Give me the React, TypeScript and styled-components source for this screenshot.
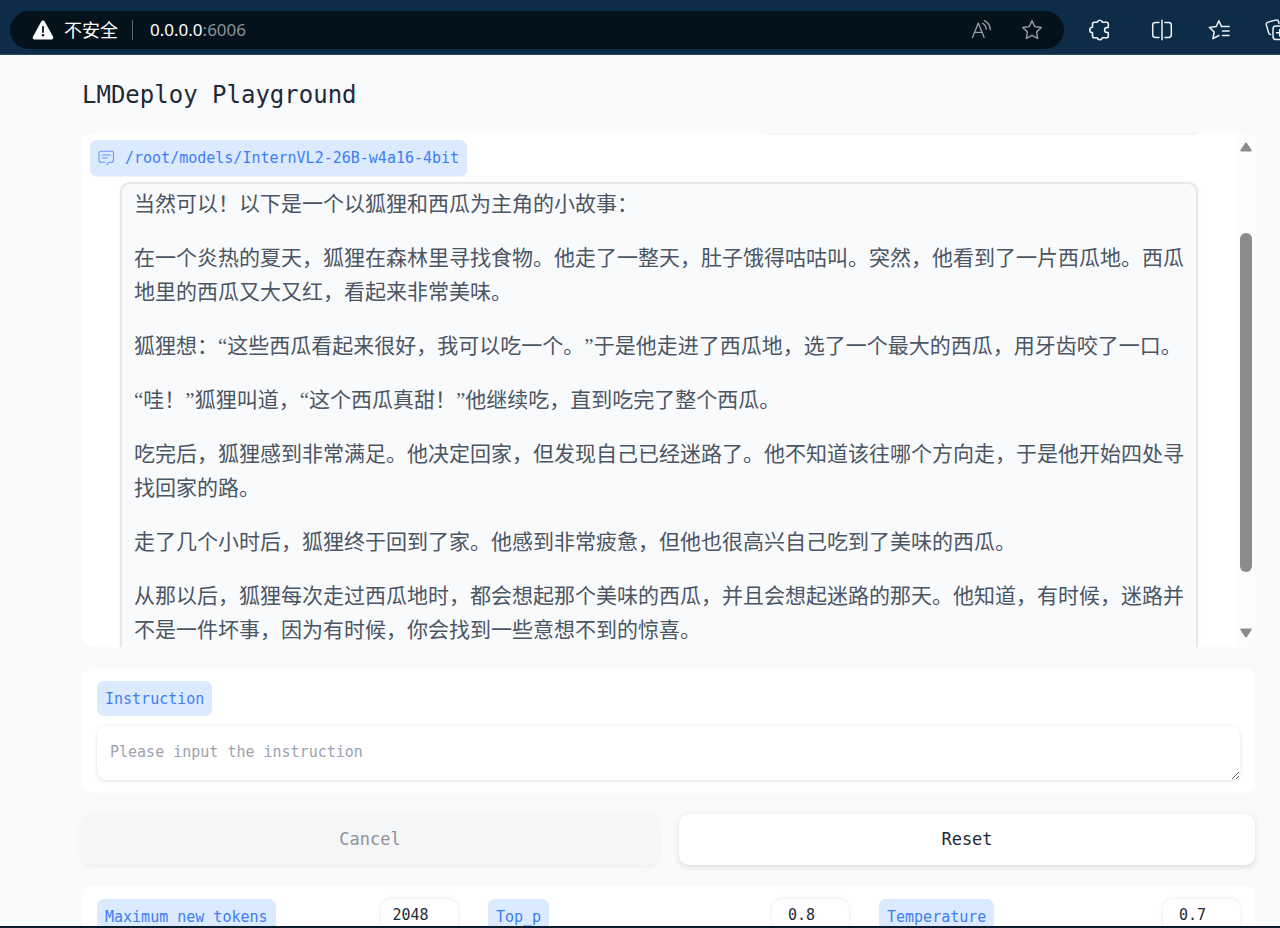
import React from "react";
import styled, { createGlobalStyle, css } from "styled-components";

const GlobalStyle = createGlobalStyle`
  *, *::before, *::after { box-sizing: border-box; }
  body { margin: 0; background: #f9fafc; }
`;

const mono = `"DejaVu Sans Mono", "Liberation Mono", monospace`;
const sans = `"Noto Sans", "Noto Sans CJK SC", sans-serif`;
const story = `"Liberation Serif", "Noto Sans CJK SC", sans-serif`;

const Window = styled.div`
  display: flex;
  flex-direction: column;
  height: 100vh;
  overflow: hidden;
  background: #f9fafc;
  border-bottom: 2px solid #0a1c30;
  font-family: ${mono};
  color: #1f2937;
`;

const BrowserBar = styled.header`
  display: flex;
  flex-shrink: 0;
  align-items: center;
  height: 55px;
  padding: 6px 0 0 10px;
  background: #0d2c48;
  border-bottom: 1px solid #2a455e;
  overflow: hidden;
`;

const AddressBar = styled.div`
  display: flex;
  flex: 1;
  align-items: center;
  height: 38px;
  padding: 0 21px 0 22px;
  border-radius: 19px;
  background: #04121c;
  color: #fff;
  font-family: ${sans};
`;

const Security = styled.span`
  margin: 0 14px 0 10px;
  font-size: 18px;
  line-height: 24px;
`;

const Divider = styled.span<{ $tone: string }>`
  width: 1px;
  height: 20px;
  background: ${(p) => p.$tone};
`;

const Url = styled.span`
  flex: 1;
  margin-left: 17px;
  font-size: 17px;
  line-height: 24px;
`;

const Port = styled.span`
  color: #8b9096;
`;

const IconButton = styled.button<{ $tone?: string }>`
  display: flex;
  flex-shrink: 0;
  padding: 0;
  border: 0;
  background: none;
  color: ${(p) => p.$tone ?? "#eef3f8"};
`;

const AddressTools = styled.div`
  display: flex;
  gap: 28px;
`;

const Toolbar = styled.nav`
  display: flex;
  flex-shrink: 0;
  align-items: center;
  gap: 20px;
  width: 216px;
  padding-left: 25px;
  overflow: hidden;
`;

const ToolbarGroup = styled.div`
  display: flex;
  gap: 35px;
`;

const Page = styled.main`
  flex: 1;
  min-height: 0;
  padding: 24px 25px 0 82px;
  overflow: hidden;
`;

const Title = styled.h1`
  margin: 0 0 22px;
  font-size: 24px;
  font-weight: 400;
  line-height: 32px;
`;

const Card = styled.section`
  border-radius: 10px;
  background: #fff;
`;

const Chat = styled(Card)`
  display: flex;
  height: 514px;
  margin-bottom: 21px;
  overflow: hidden;
`;

const Messages = styled.div`
  flex: 1;
  padding: 0 38px 0 8px;
  overflow: hidden;
`;

const UserBubbleEdge = styled.div`
  width: 39%;
  height: 2px;
  margin: 0 0 5px auto;
  border-radius: 0 0 8px 8px;
  background: #f4f5f6;
`;

const chip = css`
  display: inline-flex;
  align-items: center;
  height: 35px;
  padding: 0 8px;
  border-radius: 7px;
  background: #dbeafe;
  color: #3f7df6;
  font-size: 15px;
  line-height: 20px;
  white-space: nowrap;
`;

const Chip = styled.label`
  ${chip}
`;

const ModelChip = styled.div`
  ${chip}
  display: flex;
  width: fit-content;
  height: 36px;
  gap: 10px;
  margin-bottom: 6px;
  box-shadow: 0 1px 1px rgba(0, 0, 0, 0.06);
`;

const Bubble = styled.article`
  margin-left: 30px;
  padding: 3px 11px 12px 12px;
  border: 2px solid #e5e7eb;
  border-radius: 10px;
  background: #f9fafc;
  box-shadow: 0 1px 4px rgba(0, 0, 0, 0.06);
  color: #4b5563;
  font-family: ${story};
  font-size: 21px;
  line-height: 34px;
  text-spacing-trim: space-all;
`;

const Paragraph = styled.p`
  margin: 0 0 20px;
`;

const ScrollTrack = styled.div`
  display: flex;
  flex-direction: column;
  align-items: center;
  width: 19px;
  padding: 9px 0;
  background: #fcfcfc;
`;

const ScrollLane = styled.div`
  display: flex;
  flex: 1;
  flex-direction: column;
`;

const ScrollSpace = styled.div<{ $share: number }>`
  flex: ${(p) => p.$share};
`;

const ScrollThumb = styled.div`
  flex: 339;
  width: 12px;
  border-radius: 6px;
  background: #8b8b8b;
`;

const InstructionCard = styled(Card)`
  display: flex;
  flex-direction: column;
  align-items: flex-start;
  gap: 10px;
  margin-bottom: 21px;
  padding: 13px 15px;
`;

const TextArea = styled.textarea`
  display: block;
  width: 100%;
  height: 54px;
  padding: 15px 13px;
  border: 0;
  border-radius: 10px;
  background: #fff;
  box-shadow: 0 1px 4px rgba(0, 0, 0, 0.12);
  color: #1f2937;
  font-family: ${mono};
  font-size: 15px;
  line-height: 22px;
  &::placeholder { color: #9ca3af; }
`;

const Actions = styled.div`
  display: grid;
  grid-template-columns: 1fr 1fr;
  gap: 21px;
  margin-bottom: 21px;
`;

const ActionButton = styled.button`
  height: 51px;
  padding: 0 16px 1px;
  border: 0;
  border-radius: 10px;
  background: #fff;
  box-shadow: 0 2px 6px rgba(0, 0, 0, 0.13);
  color: #1f2937;
  font-family: ${mono};
  font-size: 17px;
  line-height: 24px;
  &:disabled {
    background: #f5f6f8;
    box-shadow: 0 2px 6px rgba(0, 0, 0, 0.06);
    color: #8f9296;
  }
`;

const Settings = styled(Card)`
  display: grid;
  grid-template-columns: repeat(3, 1fr);
  gap: 30px;
  padding: 13px 15px;
`;

const Setting = styled.div`
  display: flex;
  align-items: flex-start;
  justify-content: space-between;
`;

const NumberBox = styled.input`
  width: 77px;
  height: 32px;
  padding: 0 20px 0 2px;
  border: 0;
  border-radius: 10px;
  background: #fff;
  box-shadow: 0 0 4px rgba(0, 0, 0, 0.1);
  color: #1f2937;
  font-family: ${mono};
  font-size: 15px;
  line-height: 20px;
  text-align: center;
`;

const line = {
  fill: "none",
  stroke: "currentColor",
  strokeLinecap: "round" as const,
  strokeLinejoin: "round" as const,
};

const WarningIcon = () => (
  <svg width="22" height="20" viewBox="0 0 22 20" aria-hidden="true">
    <path d="M9.3 1.4a2 2 0 0 1 3.4 0l8.4 15.4a1.8 1.8 0 0 1-1.6 2.7H2.5a1.8 1.8 0 0 1-1.6-2.7z" fill="#fff" />
    <path d="M11 6.8v5.2" stroke="#04121c" strokeWidth="1.8" strokeLinecap="round" />
    <circle cx="11" cy="15.2" r="1.2" fill="#04121c" />
  </svg>
);

const ReadAloudIcon = () => (
  <svg width="22" height="22" viewBox="0 0 22 22" {...line} strokeWidth="1.3" aria-hidden="true">
    <path d="M1.5 18.5 7.3 4l5.8 14.5M3.7 13.3h7.2" />
    <path d="M11.4 4.4c2.2 1 3.6 3 3.8 5.8M13.3 1.6c3.6 1.7 5.8 4.8 6 9.2" />
  </svg>
);

const StarIcon = () => (
  <svg width="22" height="22" viewBox="0 0 22 22" {...line} strokeWidth="1.4" aria-hidden="true">
    <path d="M11 1.7l2.8 5.9 6.5.9-4.7 4.5 1.1 6.5L11 16.4l-5.7 3.1 1.1-6.5L1.7 8.5l6.5-.9z" />
  </svg>
);

const PuzzleIcon = () => (
  <svg width="22" height="22" viewBox="0 0 22 22" {...line} strokeWidth="1.6" aria-hidden="true">
    <path d="M8.2 3.2a2.7 2.7 0 0 1 5.2 0h4.1c1 0 1.800.8 1.800 1.800v3.500h-1.200a2.500 2.500 0 0 0 0 5h1.200v3.500c0 1-.8 1.800-1.800 1.800h-4.100a2.700 2.700 0 0 1-5.200 0H5.300c-1 0-1.800-.8-1.800-1.800v-3.300a2.700 2.700 0 0 1 0-5.400V5c0-1 .8-1.800 1.800-1.800z" />
  </svg>
);

const SplitIcon = () => (
  <svg width="22" height="22" viewBox="0 0 22 22" {...line} strokeWidth="1.5" aria-hidden="true">
    <path d="M11 1.2v19.6M8 3.600H4.400c-1.500 0-2.700 1.200-2.700 2.700v9.400c0 1.500 1.200 2.700 2.700 2.700H8M14 3.600h3.600c1.500 0 2.700 1.200 2.700 2.700v9.400c0 1.500-1.200 2.700-2.700 2.700H14" />
  </svg>
);

const FavoritesIcon = () => (
  <svg width="22" height="22" viewBox="0 0 22 22" {...line} strokeWidth="1.5" aria-hidden="true">
    <path d="M13.500 7.500 10.900 1.700 8.200 7.500l-6.800.9 4.800 4.600-1.300 6.700 6-3.200" />
    <path d="M13.500 7.500h7.600M14.500 12h6.600M14.500 16.500h6.600" />
  </svg>
);

const CollectionsIcon = () => (
  <svg width="22" height="22" viewBox="0 0 22 22" {...line} strokeWidth="1.5" aria-hidden="true">
    <path d="M5.6 15.6c-1.2-.2-1.8-1-2.1-2.2L1.4 6.1C1 4.700 1.700 3.500 3 3.100l7.500-2c1.400-.4 2.700.3 3.100 1.700l.4 1.600" />
    <rect x="8" y="7" width="13.500" height="13.500" rx="3" />
    <path d="M14.700 10.500v6.500M11.500 13.700h6.500" />
  </svg>
);

const ChatIcon = () => (
  <svg width="17" height="16" viewBox="0 0 17 16" {...line} strokeWidth="1.1" opacity="0.75" aria-hidden="true">
    <path d="M7 12.200H3A2 2 0 0 1 1 10.200V3.200a2 2 0 0 1 2-2h10.500a2 2 0 0 1 2 2v7a2 2 0 0 1-2 2h-2.300L8.800 14.700" />
    <path d="M4 5h8.500M4 8h5.500" />
  </svg>
);

const ArrowIcon = ({ down = false }: { down?: boolean }) => (
  <svg width="12" height="10" viewBox="0 0 12 10" aria-hidden="true">
    <path
      d={down ? "M1.300 1.500h9.400L6 8.500z" : "M1.300 8.500h9.400L6 1.500z"}
      fill="#8b8b8b"
      stroke="#8b8b8b"
      strokeWidth="2"
      strokeLinejoin="round"
    />
  </svg>
);

const paragraphs = [
  "当然可以！以下是一个以狐狸和西瓜为主角的小故事：",
  "在一个炎热的夏天，狐狸在森林里寻找食物。他走了一整天，肚子饿得咕咕叫。突然，他看到了一片西瓜地。西瓜地里的西瓜又大又红，看起来非常美味。",
  "狐狸想：“这些西瓜看起来很好，我可以吃一个。”于是他走进了西瓜地，选了一个最大的西瓜，用牙齿咬了一口。",
  "“哇！”狐狸叫道，“这个西瓜真甜！”他继续吃，直到吃完了整个西瓜。",
  "吃完后，狐狸感到非常满足。他决定回家，但发现自己已经迷路了。他不知道该往哪个方向走，于是他开始四处寻找回家的路。",
  "走了几个小时后，狐狸终于回到了家。他感到非常疲惫，但他也很高兴自己吃到了美味的西瓜。",
  "从那以后，狐狸每次走过西瓜地时，都会想起那个美味的西瓜，并且会想起迷路的那天。他知道，有时候，迷路并不是一件坏事，因为有时候，你会找到一些意想不到的惊喜。",
];

const settings = [
  { id: "max-tokens", label: "Maximum new tokens", value: "2048" },
  { id: "top-p", label: "Top_p", value: "0.8" },
  { id: "temperature", label: "Temperature", value: "0.7" },
];

export default function App() {
  return (
    <Window>
      <GlobalStyle />
      <BrowserBar>
        <AddressBar>
          <WarningIcon />
          <Security lang="zh-CN">不安全</Security>
          <Divider $tone="#5d666e" />
          <Url>
            0.0.0.0<Port>:6006</Port>
          </Url>
          <AddressTools>
            <IconButton $tone="#9ba1a6" aria-label="Read aloud"><ReadAloudIcon /></IconButton>
            <IconButton $tone="#9ba1a6" aria-label="Add to favorites"><StarIcon /></IconButton>
          </AddressTools>
        </AddressBar>
        <Toolbar>
          <IconButton aria-label="Extensions"><PuzzleIcon /></IconButton>
          <Divider $tone="#3d566d" />
          <ToolbarGroup>
            <IconButton aria-label="Split screen"><SplitIcon /></IconButton>
            <IconButton aria-label="Favorites"><FavoritesIcon /></IconButton>
            <IconButton aria-label="Collections"><CollectionsIcon /></IconButton>
          </ToolbarGroup>
        </Toolbar>
      </BrowserBar>

      <Page>
        <Title>LMDeploy Playground</Title>

        <Chat>
          <Messages>
            <UserBubbleEdge />
            <ModelChip>
              <ChatIcon />
              /root/models/InternVL2-26B-w4a16-4bit
            </ModelChip>
            <Bubble lang="zh-CN">
              {paragraphs.map((text) => (
                <Paragraph key={text}>{text}</Paragraph>
              ))}
            </Bubble>
          </Messages>
          <ScrollTrack>
            <IconButton aria-label="Scroll up"><ArrowIcon /></IconButton>
            <ScrollLane>
              <ScrollSpace $share={81} />
              <ScrollThumb />
              <ScrollSpace $share={56} />
            </ScrollLane>
            <IconButton aria-label="Scroll down"><ArrowIcon down /></IconButton>
          </ScrollTrack>
        </Chat>

        <InstructionCard>
          <Chip htmlFor="instruction">Instruction</Chip>
          <TextArea id="instruction" rows={1} placeholder="Please input the instruction" />
        </InstructionCard>

        <Actions>
          <ActionButton disabled>Cancel</ActionButton>
          <ActionButton>Reset</ActionButton>
        </Actions>

        <Settings>
          {settings.map((s) => (
            <Setting key={s.id}>
              <Chip htmlFor={s.id}>{s.label}</Chip>
              <NumberBox id={s.id} defaultValue={s.value} />
            </Setting>
          ))}
        </Settings>
      </Page>
    </Window>
  );
}
